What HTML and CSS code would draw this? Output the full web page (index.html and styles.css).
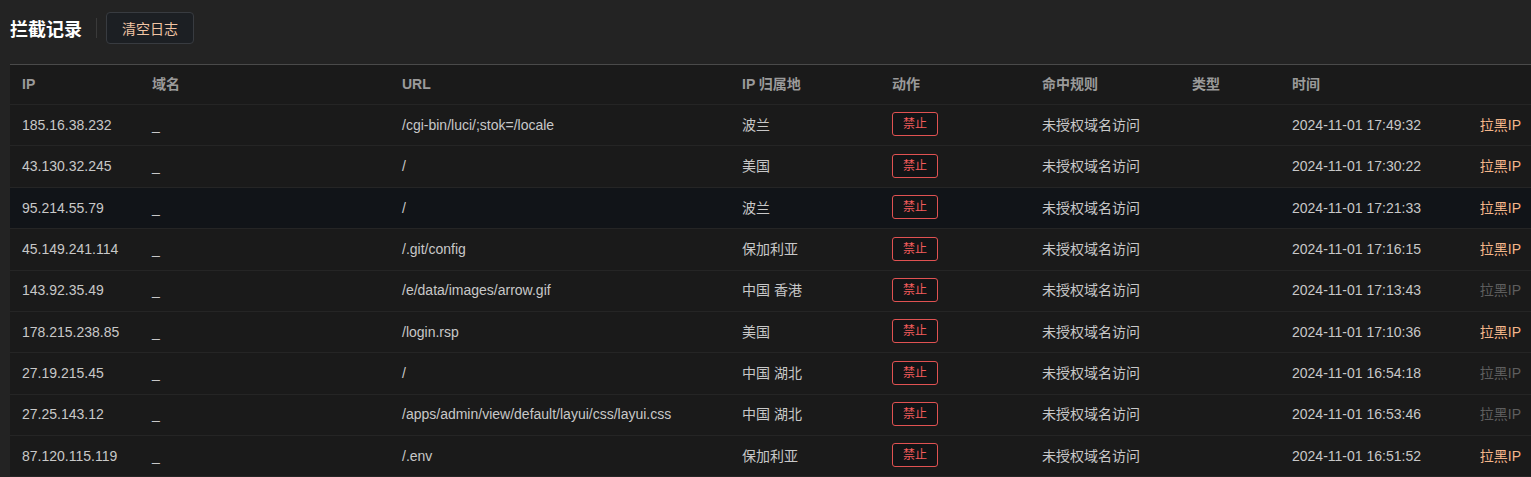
FILE: index.html
```html
<!DOCTYPE html>
<html lang="zh-CN">
<head>
    <meta charset="UTF-8">
    <meta name="viewport" content="width=device-width, initial-scale=1.0">
    <title>拦截记录</title>
    <link rel="stylesheet" href="styles.css">
</head>
<body>
    <div class="toolbar">
        <h1 class="title">拦截记录</h1>
        <span class="divider"></span>
        <button class="btn">清空日志</button>
    </div>

    <table class="log-table">
        <colgroup>
            <col style="width:130px">
            <col style="width:250px">
            <col style="width:340px">
            <col style="width:150px">
            <col style="width:150px">
            <col style="width:150px">
            <col style="width:100px">
            <col style="width:170px">
            <col>
        </colgroup>
        <thead>
            <tr>
                <th>IP</th>
                <th>域名</th>
                <th>URL</th>
                <th>IP 归属地</th>
                <th>动作</th>
                <th>命中规则</th>
                <th>类型</th>
                <th>时间</th>
                <th></th>
            </tr>
        </thead>
        <tbody>
            <tr>
                <td>185.16.38.232</td><td>_</td><td>/cgi-bin/luci/;stok=/locale</td><td>波兰</td>
                <td><span class="tag">禁止</span></td><td>未授权域名访问</td><td></td><td>2024-11-01 17:49:32</td>
                <td class="op"><a class="link">拉黑IP</a></td>
            </tr>
            <tr>
                <td>43.130.32.245</td><td>_</td><td>/</td><td>美国</td>
                <td><span class="tag">禁止</span></td><td>未授权域名访问</td><td></td><td>2024-11-01 17:30:22</td>
                <td class="op"><a class="link">拉黑IP</a></td>
            </tr>
            <tr class="hover">
                <td>95.214.55.79</td><td>_</td><td>/</td><td>波兰</td>
                <td><span class="tag">禁止</span></td><td>未授权域名访问</td><td></td><td>2024-11-01 17:21:33</td>
                <td class="op"><a class="link">拉黑IP</a></td>
            </tr>
            <tr>
                <td>45.149.241.114</td><td>_</td><td>/.git/config</td><td>保加利亚</td>
                <td><span class="tag">禁止</span></td><td>未授权域名访问</td><td></td><td>2024-11-01 17:16:15</td>
                <td class="op"><a class="link">拉黑IP</a></td>
            </tr>
            <tr>
                <td>143.92.35.49</td><td>_</td><td>/e/data/images/arrow.gif</td><td>中国 香港</td>
                <td><span class="tag">禁止</span></td><td>未授权域名访问</td><td></td><td>2024-11-01 17:13:43</td>
                <td class="op"><a class="link disabled">拉黑IP</a></td>
            </tr>
            <tr>
                <td>178.215.238.85</td><td>_</td><td>/login.rsp</td><td>美国</td>
                <td><span class="tag">禁止</span></td><td>未授权域名访问</td><td></td><td>2024-11-01 17:10:36</td>
                <td class="op"><a class="link">拉黑IP</a></td>
            </tr>
            <tr>
                <td>27.19.215.45</td><td>_</td><td>/</td><td>中国 湖北</td>
                <td><span class="tag">禁止</span></td><td>未授权域名访问</td><td></td><td>2024-11-01 16:54:18</td>
                <td class="op"><a class="link disabled">拉黑IP</a></td>
            </tr>
            <tr>
                <td>27.25.143.12</td><td>_</td><td>/apps/admin/view/default/layui/css/layui.css</td><td>中国 湖北</td>
                <td><span class="tag">禁止</span></td><td>未授权域名访问</td><td></td><td>2024-11-01 16:53:46</td>
                <td class="op"><a class="link disabled">拉黑IP</a></td>
            </tr>
            <tr>
                <td>87.120.115.119</td><td>_</td><td>/.env</td><td>保加利亚</td>
                <td><span class="tag">禁止</span></td><td>未授权域名访问</td><td></td><td>2024-11-01 16:51:52</td>
                <td class="op"><a class="link">拉黑IP</a></td>
            </tr>
        </tbody>
    </table>
</body>
</html>
```

FILE: styles.css
```css
body {
    margin: 0;
    padding: 0;
    background-color: #232323;
    color: #c8c8c8;
    font-family: "Liberation Sans", Arial, "Noto Sans CJK SC", sans-serif;
    font-size: 14px;
    overflow: hidden;
}
.toolbar {
    display: flex;
    align-items: center;
    height: 32px;
    padding: 12px 10px 0 10px;
}
.title {
    margin: 0;
    font-size: 18px;
    font-weight: bold;
    color: #fff;
}
.divider {
    width: 1px;
    height: 20px;
    background-color: #3a3a3a;
    margin: 0 9px 0 14px;
}
.btn {
    height: 32px;
    padding: 0 15px;
    background-color: #1c1f23;
    border: 1px solid #383b40;
    border-radius: 4px;
    color: #f0c4a4;
    font-family: inherit;
    font-size: 14px;
    cursor: pointer;
}
.log-table {
    width: 1521px;
    margin: 20px 0 0 10px;
    border-collapse: collapse;
    table-layout: fixed;
    background-color: #1a1a1a;
    border-top: 1px solid #4a4a4a;
}
th, td {
    padding: 10px 12px;
    text-align: left;
    line-height: 20px;
    border-bottom: 1px solid #252525;
    white-space: nowrap;
}
th {
    color: #9a9a9a;
    font-weight: bold;
    padding: 9px 12px 10px 12px;
}
td {
    padding: 9.2px 12px 9.9px 12px;
    height: 20px;
}
.hover td {
    background-color: #111418;
}
.tag {
    display: inline-block;
    vertical-align: middle;
    margin: -3px 0 -1px 0;
    padding: 0 10px;
    line-height: 22px;
    border: 1px solid #e05252;
    border-radius: 3px;
    background-color: #121416;
    color: #f25c5c;
    font-size: 12px;
}
.op {
    text-align: right;
    padding-right: 10px;
}
.link {
    color: #f4b68a;
    cursor: pointer;
}
.link.disabled {
    color: #5e5e5e;
}
```
